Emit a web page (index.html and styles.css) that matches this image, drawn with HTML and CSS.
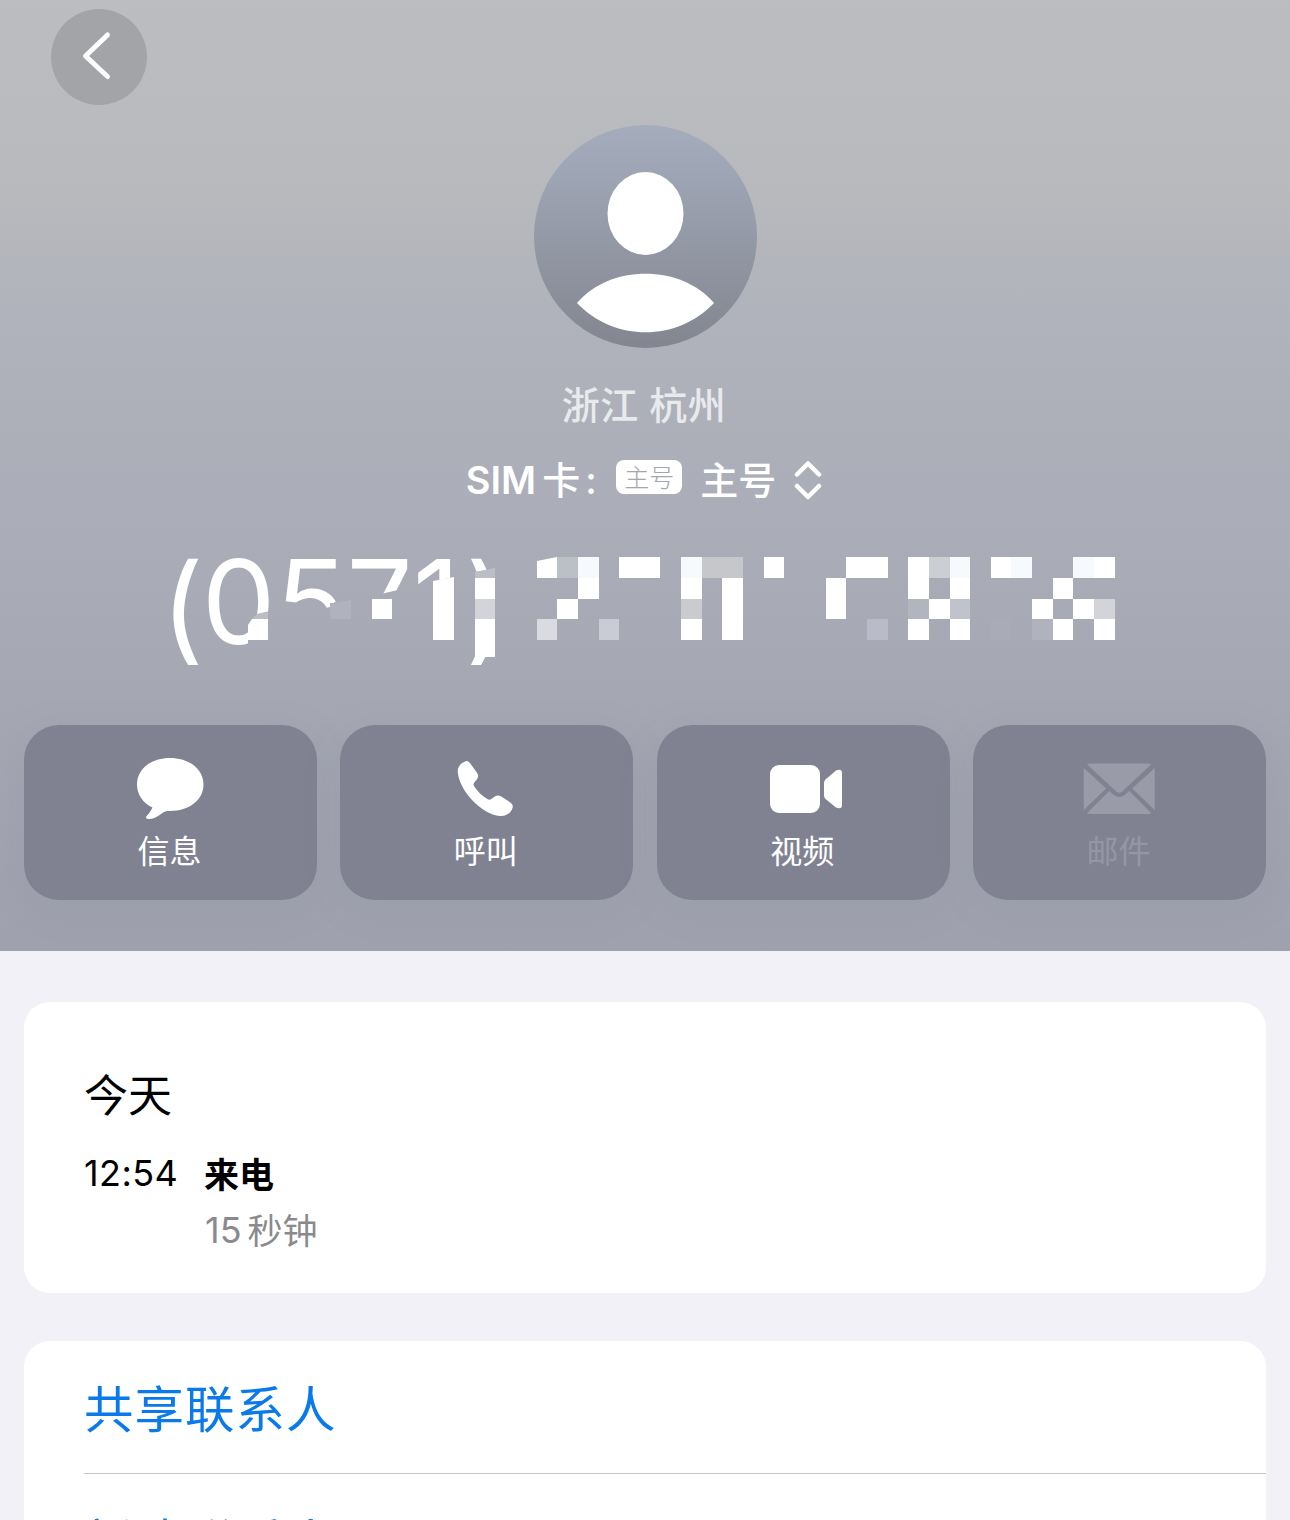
FILE: index.html
```html
<!DOCTYPE html>
<html lang="zh-CN">
    <head>
        <meta charset="UTF-8" />
        <title>联系人</title>
        <link rel="stylesheet" href="styles.css">
    </head>
    <body>
        <header class="hero">
            <button class="back" aria-label="返回">
                <svg width="96" height="96" viewBox="0 0 96 96">
                    <path d="M56.5 26 L34.5 47 L56.5 67.5" />
                </svg>
            </button>

            <svg class="avatar" width="223" height="223" viewBox="0 0 223 223">
                <defs>
                    <linearGradient id="avatar-bg" x1="0" y1="0" x2="0" y2="1">
                        <stop offset="0" stop-color="#a5adbd" />
                        <stop offset="1" stop-color="#838690" />
                    </linearGradient>
                </defs>
                <circle cx="111.5" cy="111.5" r="111.5" fill="url(#avatar-bg)" />
                <ellipse cx="111.5" cy="88.5" rx="38" ry="41.5" />
                <path d="M43 178 C76 139 147 139 180 178 C143 217 80 217 43 178 Z" />
            </svg>

            <div class="place">浙江 杭州</div>

            <div class="sim">
                <span class="sim-label">SIM</span>
                <span class="sim-card">卡</span>
                <span class="sim-colon">:</span>
                <span class="sim-badge">主号</span>
                <span class="sim-name">主号</span>
                <svg class="sim-arrows" width="28" height="40" viewBox="0 0 28 40">
                    <path d="M3 14.5 L14 3.5 L25 14.5 M3 26 L14 37 L25 26" />
                </svg>
            </div>

            <div class="number">
                <span class="number-text"><span class="paren">(</span>0571<span class="paren">)</span></span>
                <!-- Mosaico sobre o número -->
                <svg class="mosaic" width="1290" height="150" viewBox="0 530 1290 150" shape-rendering="crispEdges">
                    <path shape-rendering="auto" fill="#bcbec6" d="M252 619 L257 614 L268 612 V619 Z M475 572 L495 568 V578 H475 Z" />
                    <path shape-rendering="auto" d="M248 640 V625 L252 619 H268 V640 Z M433 581 L454 577 V640 H433 Z M537 561 L557 557 V578 H537 Z" />
                    <path d="M372 599h20v20h-20z M475 578h20v21h-20z M475 619h20v38h-20z" />
                    <path d="M578 578h21v21h-21z M557 599h21v20h-21z M619 557h41v21h-41z M681 578h21v21h-21z M681 619h21v21h-21z M722 578h21v62h-21z M764 557h20v21h-20z" />
                    <path d="M846 557h42v21h-42z M826 578h20v41h-20z M908 557h21v42h-21z M950 578h20v21h-20z M929 599h21v20h-21z M908 619h21v21h-21z M950 619h20v21h-20z" />
                    <path d="M991 557h20v21h-20z M1094 557h21v21h-21z M1053 578h20v21h-20z M1032 599h21v20h-21z M1073 599h21v20h-21z M1053 619h20v21h-20z M1094 619h21v21h-21z" />
                    <path fill="#f7fafc" d="M578 557h21v21h-21z M681 557h21v21h-21z M950 557h20v21h-20z M1011 557h21v21h-21z M1073 557h21v21h-21z" />
                    <path fill="#b0b3bd" d="M330 603 L351 600 V619 H330 Z M1032 619h21v21h-21z" />
                    <path fill="#d3d4da" d="M475 599h20v20h-20z M1094 599h21v20h-21z" />
                    <path fill="#dadbe0" d="M537 619h20v21h-20z" />
                    <path fill="#bbc0c7" d="M557 557h21v21h-21z" />
                    <path fill="#b9bcc8" d="M867 619h21v21h-21z" />
                    <path fill="#c9ccd5" d="M599 619h20v21h-20z" />
                    <path fill="#cacbcf" d="M681 599h21v20h-21z" />
                    <path fill="#c5c7cb" d="M702 557h41v21h-41z" />
                    <path fill="#cbced3" d="M929 557h21v21h-21z" />
                    <path fill="#b1b5bd" d="M908 599h21v20h-21z" />
                    <path fill="#c1c3cc" d="M950 599h20v20h-20z" />
                    <path fill="#a9abb7" d="M991 619h20v21h-20z" />
                </svg>
            </div>

            <nav class="actions">
                <button class="action">
                    <svg width="80" height="70" viewBox="0 0 80 70">
                        <path d="M40 5 C59 5 73.500 16 73.500 31.500 C73.500 47 59 58 40 58 C36 58 34 58.500 31 61 C27 64.500 21 66.500 18 66 C15.500 65.500 15.500 64 17.500 62 C20 59.500 21 57 22.500 54.500 C13 50 7 41.500 7 31.500 C7 16 21 5 40 5 Z" />
                    </svg>
                    <span>信息</span>
                </button>
                <button class="action">
                    <svg width="80" height="70" viewBox="1.2 0.500 80 70">
                        <path d="M19.500 9 C21.500 8 23 9 24.500 11 L31 20 C33 23 32.500 24.500 31 27 L28.500 30 C27.500 31.500 27.500 32.500 28.500 34 C32 39.500 36.500 43.500 41.500 46.500 C43 47.500 44 47.500 45.500 46.500 L49 44 C51.500 42.500 53 42.500 55.500 44 L64.500 50 C67 52 67.500 53.500 66.500 56 C64.500 61 60 64 54 63.500 C36 62 14 39 12 20 C11.500 14.500 15 10.500 19.500 9 Z" />
                    </svg>
                    <span>呼叫</span>
                </button>
                <button class="action">
                    <svg width="80" height="70" viewBox="0 0 80 70">
                        <rect x="7" y="12" width="50" height="48" rx="9" />
                        <path d="M61 30 Q61 28 62.500 26.500 L73 17.500 Q79 15 79 20 V52 Q79 57 73 54.500 L62.500 46 Q61 44.500 61 42.500 Z" />
                    </svg>
                    <span>视频</span>
                </button>
                <button class="action disabled">
                    <svg width="80" height="70" viewBox="0.800 0 80 70">
                        <path d="M8 11.500 Q9 10.500 11 10.500 H69 Q71 10.500 72 11.500 L43 38.500 Q40 41 37 38.500 Z" />
                        <path d="M4.500 15 L27 35.500 L4.500 57 Z M75.500 15 L53 35.500 L75.500 57 Z" />
                        <path d="M8 60 L30 38 L34.500 42 Q40 46 45.500 42 L50 38 L72 60 Q71 61 69 61 H11 Q9 61 8 60 Z" />
                    </svg>
                    <span>邮件</span>
                </button>
            </nav>
        </header>

        <main class="content">
            <section class="card history">
                <h2>今天</h2>
                <div class="call">
                    <span class="time">12:54</span>
                    <div class="call-info">
                        <div class="call-type">来电</div>
                        <div class="duration"><span>15</span><span class="unit">秒钟</span></div>
                    </div>
                </div>
            </section>

            <section class="card links">
                <a class="link">共享联系人</a>
                <a class="link">新建联系人</a>
            </section>
        </main>
    </body>
</html>
```

FILE: styles.css
```css
* {
  box-sizing: border-box;
}

body {
  margin: 0;
  height: 1520px;
  overflow: hidden;
  background-color: #f2f1f8;
  font-family: Inter, "Noto Sans CJK SC", sans-serif;
  color: #000;
}

button {
  border: none;
  padding: 0;
  font-family: inherit;
}

svg {
  display: block;
  fill: #fff;
}

.hero {
  height: 951px;
  padding: 9px 24px 0;
  display: flex;
  flex-direction: column;
  align-items: center;
  background: linear-gradient(#bcbdc1 0, #b8b9bd 200px, #b0b3bb 310px, #abaeb8 500px, #a5a7b3 700px, #9fa1ae 951px);
  color: #fff;
}

.back {
  align-self: flex-start;
  width: 96px;
  height: 96px;
  margin-left: 27px;
  border-radius: 50%;
  background-color: #a3a4a8;
}

.back path,
.sim-arrows path {
  fill: none;
  stroke: #fff;
  stroke-width: 5;
  stroke-linecap: round;
  stroke-linejoin: round;
}

.sim-arrows path {
  stroke-width: 4.5;
}

.avatar {
  margin-top: 20px;
}

.place {
  height: 56px;
  margin: 29px 2px 0 0;
  font-size: 38px;
  font-weight: 500;
  line-height: 56px;
  letter-spacing: 0.5px;
  color: #e8eaed;
}

.sim {
  height: 56px;
  margin-top: 19px;
  display: flex;
  align-items: center;
  font-size: 38px;
  font-weight: 500;
  line-height: 56px;
}

.sim-label {
  margin-left: -2px;
  font-weight: 600;
  line-height: 54px;
}

.sim-card {
  margin-left: 6px;
}

.sim-colon {
  width: 12px;
  margin-left: 5px;
  line-height: 53px;
}

.sim-badge {
  width: 66px;
  height: 34px;
  margin: 0 18px 6px 19px;
  border-radius: 8px;
  background-color: #fff;
  color: #a3a5b0;
  font-size: 25px;
  font-weight: 300;
  line-height: 37px;
  text-align: center;
}

.sim-arrows {
  margin-left: 18px;
}

.number {
  position: relative;
  width: 1290px;
  height: 150px;
  margin-top: 22px;
}

.number-text {
  display: block;
  padding-left: 161px;
  font-size: 117px;
  line-height: 143px;
  clip-path: polygon(150px 0, 520px 0, 520px 35px, 475px 42px, 475px 127px, 500px 127px, 500px 150px, 465px 150px, 465px 44px, 433px 52px, 385px 63px, 340px 74px, 326px 78px, 284px 78px, 270px 81px, 254px 85px, 248px 94px, 248px 150px, 150px 150px);
}

.paren {
  margin-right: -2px;
  line-height: 0;
  vertical-align: -5px;
  /* keeps the parentheses from being raised to cap height */
  font-feature-settings: "calt" 0;
}

.paren:last-child {
  margin-left: 5px;
}

.mosaic {
  position: absolute;
  left: 0;
  top: 0;
}

.actions {
  width: 1242px;
  margin-top: 45px;
  display: grid;
  grid-template-columns: repeat(4, 1fr);
  gap: 23.5px;
}

.action {
  height: 175px;
  padding-top: 28px;
  display: flex;
  flex-direction: column;
  align-items: center;
  border-radius: 35px;
  background-color: #808292;
  box-shadow: 0 8px 40px rgba(110, 112, 130, 0.12);
  color: #fff;
  font-size: 32px;
  line-height: 48px;
}

.action span {
  margin: 5px 2px 0 0;
}

.action.disabled {
  color: #9596a5;
}

.action.disabled svg {
  fill: #9a9ba9;
}

.content {
  padding: 51px 24px 0;
}

.card {
  border-radius: 26px;
  background-color: #fff;
}

.history {
  height: 291px;
  padding: 62px 60px 0;
}

.history h2 {
  margin: 0;
  font-size: 44px;
  font-weight: 400;
  line-height: 64px;
}

.call {
  display: flex;
  margin-top: 17px;
  font-size: 36px;
  line-height: 56px;
}

.time {
  width: 120px;
  letter-spacing: 0.4px;
}

.call-type {
  font-size: 35px;
  font-weight: 700;
  line-height: 61px;
}

.duration {
  display: flex;
  gap: 6px;
  padding-left: 1px;
  color: #8a8a8e;
  line-height: 48px;
}

.unit {
  font-size: 35px;
  line-height: 50px;
}

.links {
  height: 179px;
  margin-top: 48px;
  padding-left: 60px;
  overflow: hidden;
  border-radius: 26px 26px 0 0;
}

.link {
  display: block;
  height: 133px;
  border-bottom: 1px solid #c6c6c8;
  color: #0a7aea;
  font-size: 49.5px;
  line-height: 139px;
  letter-spacing: 1px;
}
```
